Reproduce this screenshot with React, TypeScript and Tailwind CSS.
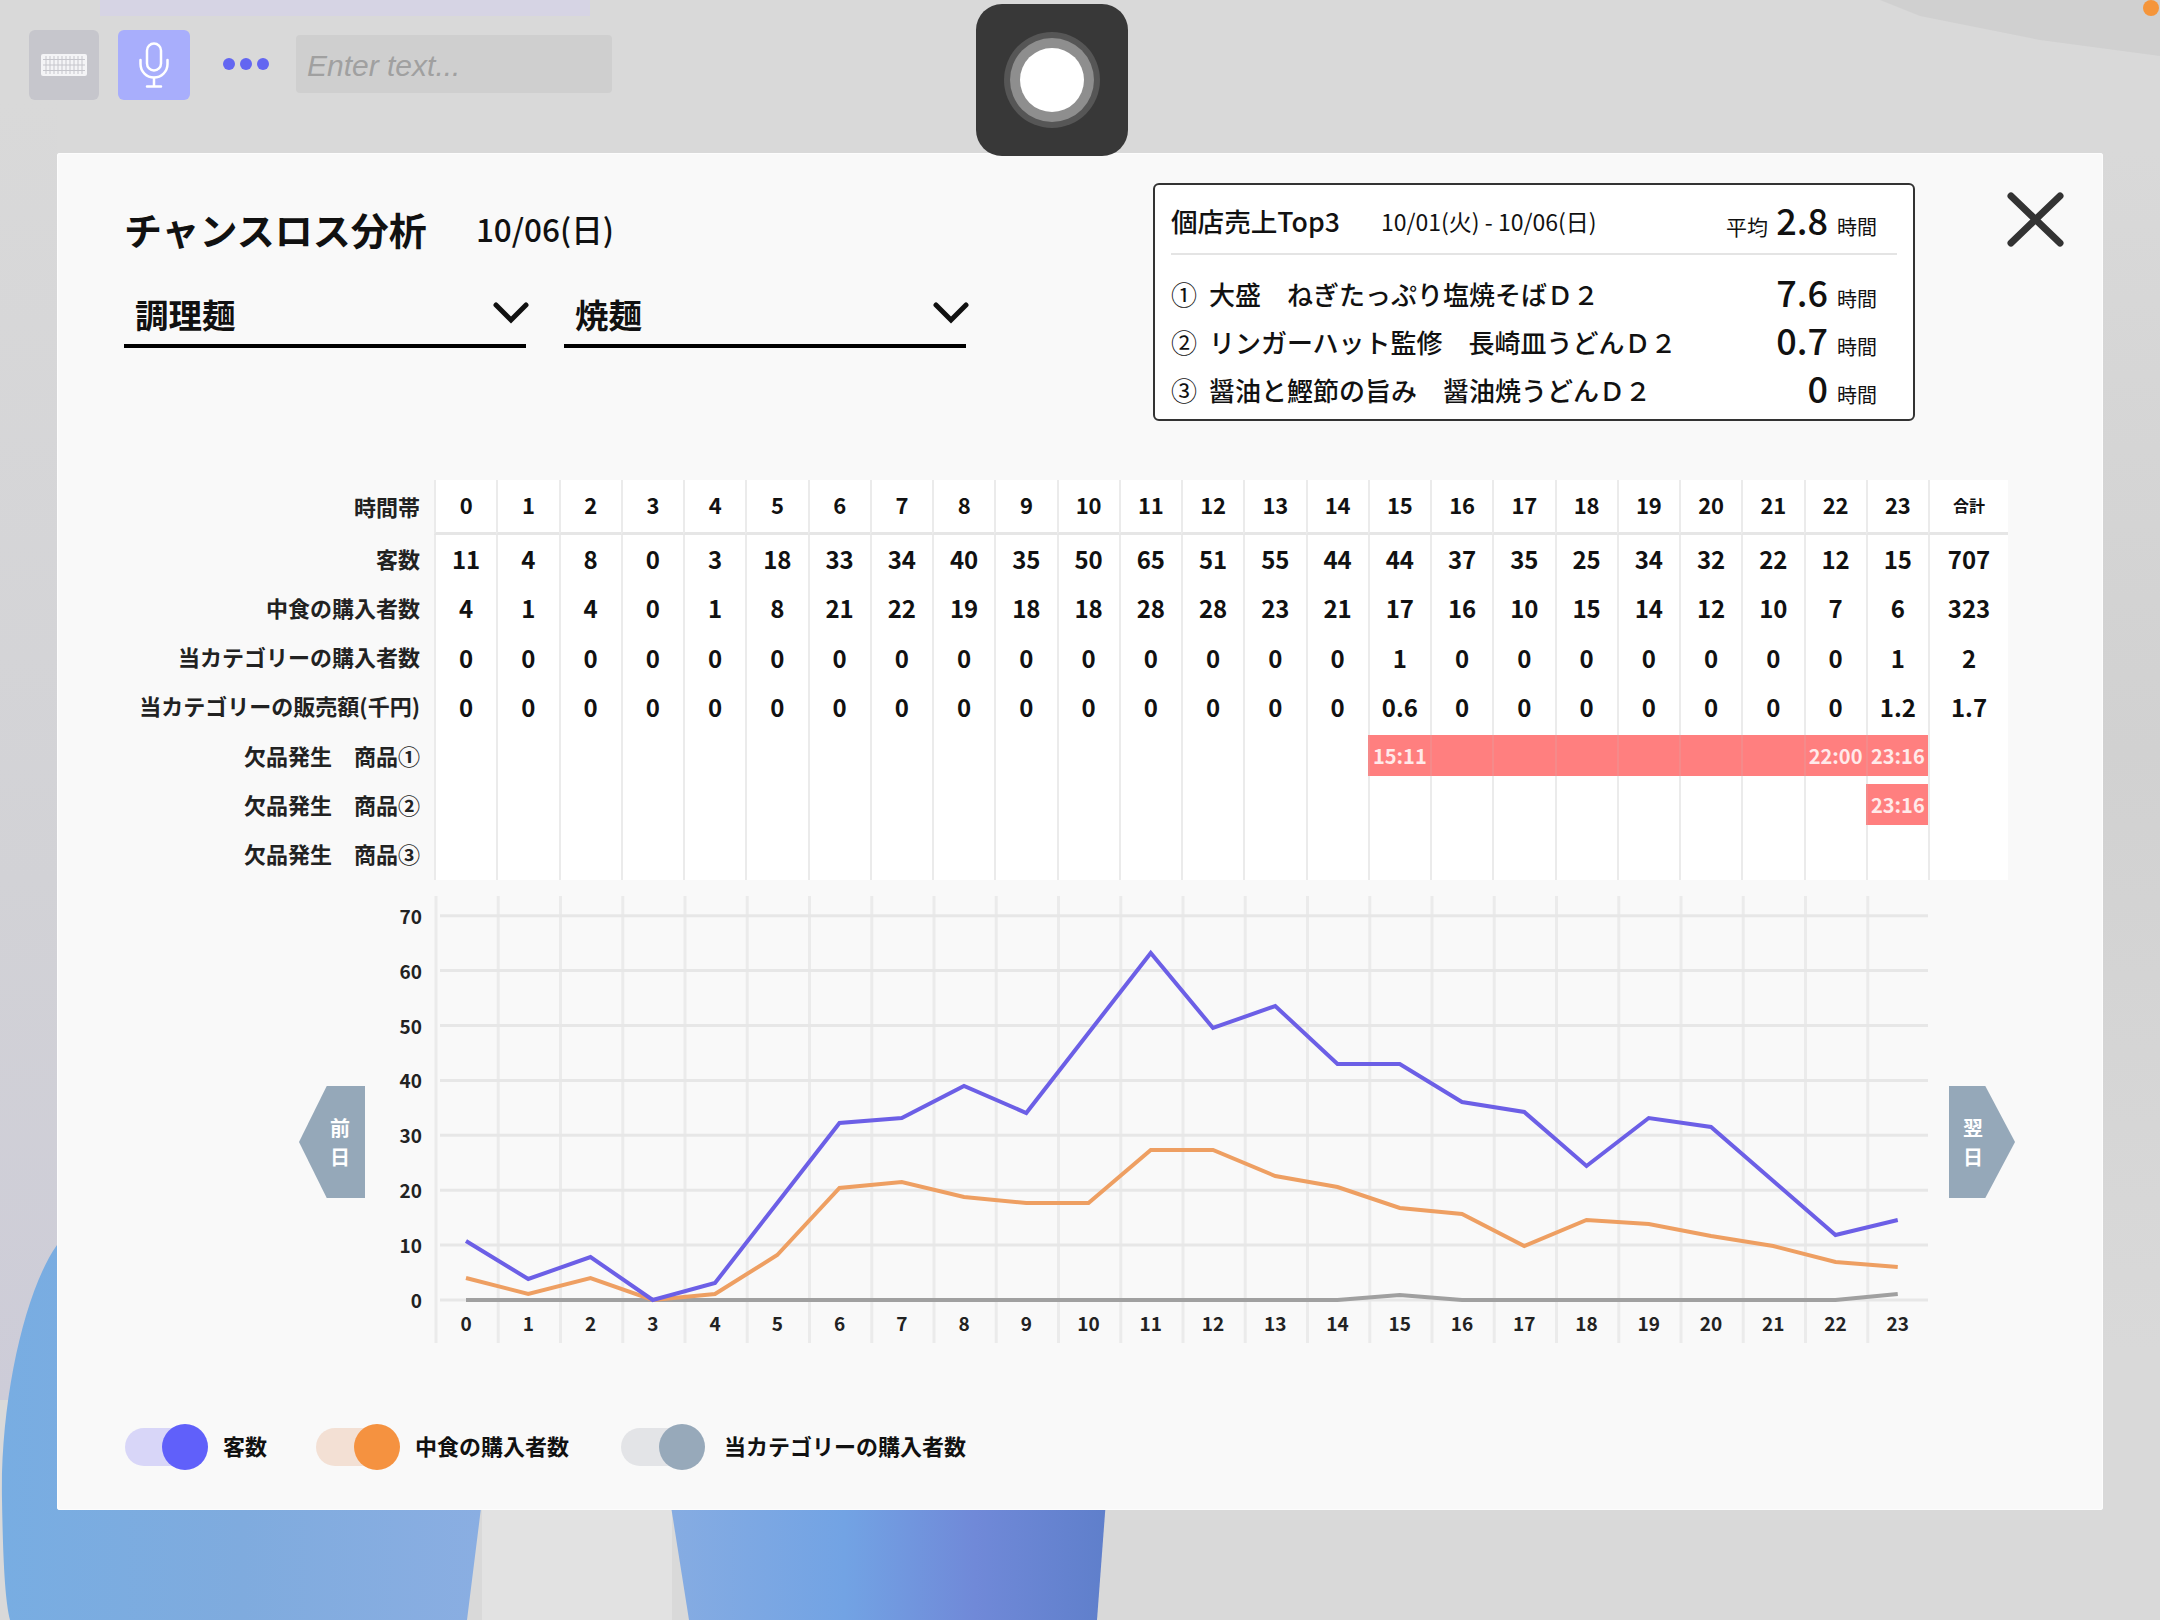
const hours = Array.from({ length: 24 }, (_, i) => i);

const rows = [
  { label: '客数', values: ['11', '4', '8', '0', '3', '18', '33', '34', '40', '35', '50', '65', '51', '55', '44', '44', '37', '35', '25', '34', '32', '22', '12', '15'], total: '707' },
  { label: '中食の購入者数', values: ['4', '1', '4', '0', '1', '8', '21', '22', '19', '18', '18', '28', '28', '23', '21', '17', '16', '10', '15', '14', '12', '10', '7', '6'], total: '323' },
  { label: '当カテゴリーの購入者数', values: ['0', '0', '0', '0', '0', '0', '0', '0', '0', '0', '0', '0', '0', '0', '0', '1', '0', '0', '0', '0', '0', '0', '0', '1'], total: '2' },
  { label: '当カテゴリーの販売額(千円)', values: ['0', '0', '0', '0', '0', '0', '0', '0', '0', '0', '0', '0', '0', '0', '0', '0.6', '0', '0', '0', '0', '0', '0', '0', '1.2'], total: '1.7' },
];

// hour -> label ('' = red without text)
const stockouts: { label: string; cells: Record<number, string> }[] = [
  { label: '欠品発生　商品①', cells: { 15: '15:11', 16: '', 17: '', 18: '', 19: '', 20: '', 21: '', 22: '22:00', 23: '23:16' } },
  { label: '欠品発生　商品②', cells: { 23: '23:16' } },
  { label: '欠品発生　商品③', cells: {} },
];

const top3 = [
  { mark: '①', name: '大盛　ねぎたっぷり塩焼そばＤ２', hours: '7.6' },
  { mark: '②', name: 'リンガーハット監修　長崎皿うどんＤ２', hours: '0.7' },
  { mark: '③', name: '醤油と鰹節の旨み　醤油焼うどんＤ２', hours: '0' },
];

const purpleY = [1241, 1279, 1257, 1300, 1283, 1203, 1123, 1118, 1086, 1113, 1033, 953, 1028, 1006, 1064, 1064, 1102, 1112, 1166, 1118, 1127, 1181, 1235, 1220];
const orangeY = [1278, 1294, 1278, 1300, 1294, 1255, 1188, 1182, 1197, 1203, 1203, 1150, 1150, 1176, 1187, 1208, 1214, 1246, 1220, 1224, 1236, 1246, 1262, 1267];
const grayY = hours.map((h) => (h === 15 ? 1295 : h === 23 ? 1294 : 1300));

const pointX = (i: number) => 466 + 62.25 * i;
const toPoints = (ys: number[]) => ys.map((y, i) => `${pointX(i)},${y}`).join(' ');

function Wallpaper() {
  return (
    <svg className="absolute inset-0" width="2160" height="1620" viewBox="0 0 2160 1620">
      <defs>
        <linearGradient id="blueA" x1="0" y1="0" x2="1" y2="0">
          <stop offset="0" stopColor="#78ade2" />
          <stop offset="0.5" stopColor="#7fabde" />
          <stop offset="1" stopColor="#8aaee2" />
        </linearGradient>
        <linearGradient id="blueB" x1="0" y1="0" x2="1" y2="0">
          <stop offset="0" stopColor="#86ace2" />
          <stop offset="0.4" stopColor="#72a3e4" />
          <stop offset="0.7" stopColor="#7089d8" />
          <stop offset="1" stopColor="#5f7fcb" />
        </linearGradient>
        <linearGradient id="sideL" x1="0" y1="0" x2="0" y2="1">
          <stop offset="0" stopColor="#d9d9d9" />
          <stop offset="0.6" stopColor="#d2d2d6" />
          <stop offset="1" stopColor="#cdccd8" />
        </linearGradient>
        <linearGradient id="sideR" x1="0" y1="0" x2="0" y2="1">
          <stop offset="0" stopColor="#d9d9d9" />
          <stop offset="0.5" stopColor="#d1d1d1" />
          <stop offset="1" stopColor="#d9d9d9" />
        </linearGradient>
      </defs>
      <rect width="2160" height="1620" fill="#d9d9d9" />
      <polygon points="100,0 590,0 590,16 100,16" fill="#d6d4e4" />
      <polygon points="1880,0 2160,0 2160,56 2040,40 1920,16" fill="#d0d0d0" />
      <rect x="0" y="100" width="57" height="1300" fill="url(#sideL)" />
      <rect x="2103" y="150" width="57" height="1200" fill="url(#sideR)" />
      <rect x="482" y="1510" width="190" height="110" fill="#e2e2e2" />
      <path d="M57 1245 C25 1290 0 1400 2 1500 C3 1560 5 1600 10 1620 L467 1620 L482 1500 L57 1500 Z" fill="url(#blueA)" />
      <polygon points="670,1500 1106,1500 1097,1620 689,1620" fill="url(#blueB)" />
    </svg>
  );
}

function KeyboardIcon() {
  return (
    <svg width="46" height="22" viewBox="0 0 46 22">
      <rect width="46" height="22" rx="2" fill="#f4f4f6" />
      {[5.5, 11, 16.5].map((y) => (
        <line key={y} x1="2" y1={y} x2="44" y2={y} stroke="#c6c6cc" strokeWidth="1" />
      ))}
      {[5, 9, 13, 17, 21, 25, 29, 33, 37, 41].map((x) => (
        <line key={x} x1={x} y1="2" x2={x} y2="20" stroke="#c6c6cc" strokeWidth="1" />
      ))}
    </svg>
  );
}

function MicIcon() {
  return (
    <svg width="32" height="46" viewBox="0 0 32 46" fill="none" stroke="#ffffff" strokeWidth="2.5" strokeLinecap="round">
      <rect x="9" y="1.5" width="14" height="27" rx="7" />
      <path d="M2.5 18v4a13.5 13.5 0 0 0 27 0v-4" />
      <path d="M16 36v8M9 44.5h14" />
    </svg>
  );
}

function Chevron() {
  return (
    <svg className="-mr-[3px] mb-[2px]" width="36" height="22" viewBox="0 0 36 22" fill="none" stroke="#111111" strokeWidth="5" strokeLinecap="round">
      <polyline points="3,3 18,18 33,3" />
    </svg>
  );
}

function Select({ label }: { label: string }) {
  return (
    <div className="flex h-[66px] w-[402px] items-center justify-between border-b-4 border-black pl-[11px] pt-[2px]">
      <span className="text-[33.5px] font-bold text-[#111]">{label}</span>
      <Chevron />
    </div>
  );
}

function Top3Box() {
  return (
    <div className="ml-[67px] h-[238px] w-[762px] flex-none rounded-[6px] border-2 border-[#333] bg-white px-[16px] pt-[12px]">
      <div className="flex h-[52px] items-center pb-[3px]">
        <div className="w-[210px] flex-none text-[26.6px] font-medium leading-none text-[#111]">個店売上Top3</div>
        <div className="text-[23px] leading-none text-[#111]">10/01(火) - 10/06(日)</div>
        <div className="ml-auto flex items-baseline pr-[20px] text-[#111]">
          <span className="text-[21px]">平均</span>
          <span className="ml-[8px] w-[52px] text-right text-[36px] font-medium leading-none">2.8</span>
          <span className="ml-[9px] text-[20px]">時間</span>
        </div>
      </div>
      <div className="mt-[4px] h-[2px] bg-[#e4e4e4]" />
      <div className="mt-[14px]">
        {top3.map((item) => (
          <div key={item.mark} className="flex h-[48.3px] items-center pr-[20px] text-[#111]">
            <span className="w-[38px] flex-none text-[26px]">{item.mark}</span>
            <span className="text-[26px] font-medium">{item.name}</span>
            <span className="ml-auto flex items-baseline">
              <span className="text-[36px] font-medium leading-none">{item.hours}</span>
              <span className="ml-[9px] text-[20px]">時間</span>
            </span>
          </div>
        ))}
      </div>
    </div>
  );
}

function DataTable() {
  const cell = 'flex items-center justify-center border-l-2 border-[#ebebeb] bg-white pb-[1px]';
  const label = 'flex items-center justify-end pb-[3px] pr-[14px] text-[22px] font-semibold text-[#222]';
  return (
    <div className="mt-[60px] grid h-[400px] w-[1951px] grid-cols-[377px_repeat(24,minmax(0,1fr))_80px] grid-rows-[55px_repeat(7,minmax(0,1fr))] text-[24px] font-semibold text-[#111]">
      <div className={label}>時間帯</div>
      {hours.map((h) => (
        <div key={h} className={`${cell} border-b-[3px] border-b-[#e6e6e6] !pb-[3px] text-[22px]`}>{h}</div>
      ))}
      <div className={`${cell} border-b-[3px] border-b-[#e6e6e6] !pb-[3px] text-[16px]`}>合計</div>

      {rows.map((row) => (
        <div key={row.label} className="contents">
          <div className={label}>{row.label}</div>
          {row.values.map((v, i) => (
            <div key={i} className={cell}>{v}</div>
          ))}
          <div className={cell}>{row.total}</div>
        </div>
      ))}

      {stockouts.map((row) => (
        <div key={row.label} className="contents">
          <div className={label}>{row.label}</div>
          {hours.map((h) => (
            <div key={h} className="border-l-2 border-[#ebebeb] bg-white pt-[3px]">
              {h in row.cells && (
                <div className="-ml-[2px] flex h-[41px] items-center justify-center border-l-2 border-[#f58a8a] bg-[#ff7f7f] text-[20px] text-[#ffeaea]">
                  {row.cells[h]}
                </div>
              )}
            </div>
          ))}
          <div className="border-l-2 border-[#ebebeb] bg-white" />
        </div>
      ))}
    </div>
  );
}

function Chart() {
  return (
    <svg className="ml-[5px] flex-none" width="1570" height="447" viewBox="370 896 1570 447">
      {hours.map((h) => (
        <line key={h} x1={436 + 62.25 * h} y1="896" x2={436 + 62.25 * h} y2="1343" stroke="#ebebeb" strokeWidth="3" />
      ))}
      {[0, 10, 20, 30, 40, 50, 60, 70].map((v) => {
        const y = 1300 - v * 5.49;
        return (
          <g key={v}>
            <line x1="440" y1={y} x2="1928" y2={y} stroke="#e7e7e7" strokeWidth="3" />
            <text x="422" y={y + 8} textAnchor="end" fontSize="19" fontWeight="700" fill="#222">{v}</text>
          </g>
        );
      })}
      {hours.map((h) => (
        <text key={h} x={pointX(h)} y="1331" textAnchor="middle" fontSize="19" fontWeight="700" fill="#222">{h}</text>
      ))}
      <polyline points={toPoints(grayY)} fill="none" stroke="#a0a0a0" strokeWidth="4" />
      <polyline points={toPoints(orangeY)} fill="none" stroke="#ee9f62" strokeWidth="4" />
      <polyline points={toPoints(purpleY)} fill="none" stroke="#6c5fe6" strokeWidth="4" />
    </svg>
  );
}

function LegendItem({ label, track, knob, trackWidth, labelGap }: { label: string; track: string; knob: string; trackWidth: string; labelGap: string }) {
  return (
    <div className="flex items-center">
      <div className={`h-[38px] rounded-l-full ${trackWidth} ${track}`} />
      <div className={`-ml-[24px] h-[46px] w-[46px] rounded-full ${knob}`} />
      <span className={`pb-[3px] text-[22px] font-semibold text-[#111] ${labelGap}`}>{label}</span>
    </div>
  );
}

export default function App() {
  return (
    <div className="relative h-[1620px] w-[2160px] overflow-hidden font-['Noto_Sans_CJK_JP','Noto_Sans',sans-serif]">
      <Wallpaper />

      <div className="relative flex h-[153px] items-start pl-[29px] pt-[30px]">
        <div className="flex h-[70px] w-[70px] items-center justify-center rounded-[6px] bg-[#c6c6cc]">
          <KeyboardIcon />
        </div>
        <div className="ml-[19px] flex h-[70px] w-[72px] items-center justify-center rounded-[6px] bg-[#a8aefc]">
          <MicIcon />
        </div>
        <div className="ml-[33px] mt-[28px] flex gap-[5px]">
          <span className="h-[12px] w-[12px] rounded-full bg-[#6366f1]" />
          <span className="h-[12px] w-[12px] rounded-full bg-[#6366f1]" />
          <span className="h-[12px] w-[12px] rounded-full bg-[#6366f1]" />
        </div>
        <div className="ml-[27px] mt-[5px] flex h-[58px] w-[316px] items-center rounded-[4px] bg-[#cfcfcf] pl-[11px] pt-[2px] font-['Liberation_Sans',sans-serif] text-[30px] italic text-[#a0a0a0]">
          Enter text...
        </div>
      </div>

      <div className="relative ml-[57px] h-[1357px] w-[2046px] rounded-[3px] bg-[#f9f9f9] pt-[30px] shadow-[inset_0_0_0_1px_#fdfdfd]">
        <div className="flex items-start">
          <div className="w-[1029px] flex-none pl-[67px]">
            <div className="mt-[18px] flex h-[56px] items-center">
              <span className="text-[38px] font-bold leading-none text-[#111]">チャンスロス分析</span>
              <span className="ml-[49px] text-[31.5px] font-medium leading-none text-[#111]">10/06(日)</span>
            </div>
            <div className="mt-[25px] flex gap-[38px]">
              <Select label="調理麺" />
              <Select label="焼麺" />
            </div>
          </div>
          <Top3Box />
          <svg className="ml-[92px] mt-[9px] flex-none" width="57" height="55" viewBox="0 0 57 55" stroke="#333333" strokeWidth="7" strokeLinecap="round">
            <line x1="4" y1="4" x2="53" y2="51" />
            <line x1="53" y1="4" x2="4" y2="51" />
          </svg>
        </div>

        <div className="-mt-[1px]">
          <DataTable />
        </div>

        <div className="mt-[16px] flex items-start pl-[242px]">
          <div className="mt-[190px] flex h-[112px] w-[66px] flex-none flex-col items-end justify-center bg-[#95a8b9] pr-[15px] text-[20px] font-bold leading-[29px] text-white [clip-path:polygon(100%_0,100%_100%,42%_100%,0_50%,42%_0)]">
            <span>前</span>
            <span>日</span>
          </div>
          <Chart />
          <div className="ml-[9px] mt-[190px] flex h-[112px] w-[66px] flex-none flex-col items-start justify-center bg-[#95a8b9] pl-[14px] text-[20px] font-bold leading-[29px] text-white [clip-path:polygon(0_0,55%_0,100%_50%,55%_100%,0_100%)]">
            <span>翌</span>
            <span>日</span>
          </div>
        </div>

        <div className="mt-[81px] flex pl-[68px]">
          <LegendItem label="客数" track="bg-[#d8d6f8]" knob="bg-[#6060fa]" trackWidth="w-[61px]" labelGap="ml-[15px]" />
          <div className="ml-[49px]">
            <LegendItem label="中食の購入者数" track="bg-[#f3e0d4]" knob="bg-[#f59240]" trackWidth="w-[62px]" labelGap="ml-[15px]" />
          </div>
          <div className="ml-[52px]">
            <LegendItem label="当カテゴリーの購入者数" track="bg-[#e3e4e7]" knob="bg-[#97a9ba]" trackWidth="w-[62px]" labelGap="ml-[19px]" />
          </div>
        </div>
      </div>

      {/* assistive touch button, floats over the panel */}
      <div className="absolute left-[976px] top-[4px] flex h-[152px] w-[152px] items-center justify-center rounded-[26px] bg-[#383838]">
        <div className="flex h-[96px] w-[96px] items-center justify-center rounded-full bg-[#565656]">
          <div className="flex h-[84px] w-[84px] items-center justify-center rounded-full bg-[#8e8e8e]">
            <div className="h-[64px] w-[64px] rounded-full bg-white" />
          </div>
        </div>
      </div>

      <div className="absolute right-[1px] top-0 h-[16px] w-[16px] rounded-full bg-[#f5953a]" />
    </div>
  );
}
